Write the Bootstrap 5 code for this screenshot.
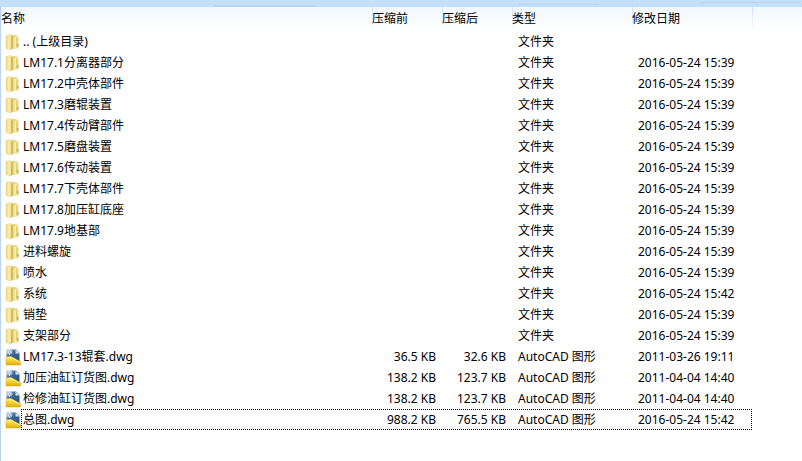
<!DOCTYPE html>
<html lang="zh-CN">
<head>
<meta charset="utf-8">
<meta name="viewport" content="width=device-width, initial-scale=1">
<title>LM17</title>
<link href="https://cdn.jsdelivr.net/npm/bootstrap@5.3.0/dist/css/bootstrap.min.css" rel="stylesheet">
<style>
body{font-family:"Noto Sans","Noto Sans CJK SC",sans-serif;font-size:12px;line-height:20px;color:#000;background:#fff}
.topband{height:7px;background:#c3dffa}
.topband i{height:1px;background:#b5d2f0;width:101px}
.topband .seg-a{margin-left:214px;height:2px}
.topband .seg-b{width:81px;margin-left:203px;margin-bottom:2px}
.topband .seg-c{margin-left:101px;margin-bottom:4px}
.listing{border-left:1px solid #b9d3f3;background:linear-gradient(#f2f8fe,#fff 24px)}
.files{table-layout:fixed;border-collapse:separate;border-spacing:0}
.c-name{width:371px}.c-size{width:70px}.c-info{width:120px}
.files thead tr{height:24px}
.files th{padding:0;font-weight:400}
.files th+th{background:linear-gradient(#c9e1fa,#fff) left/1px 100% no-repeat}
.files th button{font-size:12px;line-height:22px;color:#000}
.files td{height:21px;padding:0 6px;white-space:nowrap}
.files td:first-child{padding:0 0 0 4px}
.files svg{width:16px;height:18px;flex:none}
.fname{margin-left:2px}
.focused::after{content:"";position:absolute;left:20px;top:0;width:731px;height:21px;border:1px dotted #000}
</style>
<script src="https://cdn.jsdelivr.net/npm/bootstrap@5.3.0/dist/js/bootstrap.bundle.min.js"></script>
</head>
<body class="d-flex flex-column min-vh-100">
<svg class="position-absolute" width="0" height="0" aria-hidden="true">
<defs>
<linearGradient id="gold"><stop offset="0" stop-color="#e9d982"/><stop offset=".5" stop-color="#f9efb0"/><stop offset="1" stop-color="#e3ce72"/></linearGradient>
<linearGradient id="sheet" x2="1" y2="1"><stop offset="0" stop-color="#8fb0cf"/><stop offset=".4" stop-color="#3f6896"/><stop offset="1" stop-color="#234a7c"/></linearGradient>
<linearGradient id="ruler" x2="0" y2="1"><stop offset="0" stop-color="#fff06a"/><stop offset="1" stop-color="#e0ae08"/></linearGradient>
<symbol id="folder" viewBox="0 0 16 18">
<path d="M7 2 12 2.5 13 4V15L8 16Z" fill="#e6d27a"/>
<path d="M8 4 12.5 3.5 13.5 5V15L8 16.3Z" fill="url(#gold)"/>
<path d="M1 2.5 5 1.5 7.5 2.5V15.5L5.5 17 1 15.5Z" fill="url(#gold)" stroke="#dfca78" stroke-width=".4"/>
<path d="M6 4 7.8 2.8V15.2L6 16.7Z" fill="#d3b752"/>
<path d="M11.5 5v9.5" stroke="#dcc668" stroke-width=".8"/>
<path d="M12.8 11v2.5" stroke="#51a8c6"/>
</symbol>
<symbol id="dwg" viewBox="0 0 16 18">
<path d="M1.5 1.5H11L14.5 5V14H1.5Z" fill="url(#sheet)"/>
<path d="M10.5 1.5V5.5H14.5Z" fill="#dce8f3"/>
<path d="M1 9 6 8.5 15.5 13.5V17H1Z" fill="url(#ruler)" stroke="#d6a51a" stroke-width=".5"/>
<path d="M1.5 10 5.5 9.2 14.5 14" fill="none" stroke="#fff49a"/>
<path d="M4.5 1V7M1.5 4H7.5M2.5 2 6.5 6M6.5 2 2.5 6" stroke="#fff" stroke-width=".9"/>
<path d="M4 3.5h1v1H4z" fill="#315a87"/>
</symbol>
</defs>
</svg>
<div class="topband d-flex align-items-end"><i class="seg-a"></i><i class="seg-b"></i><i class="seg-c"></i></div>
<main class="listing flex-grow-1">
<table class="files w-100">
<colgroup><col class="c-name"><col class="c-size"><col class="c-size"><col class="c-info"><col class="c-info"><col></colgroup>
<thead><tr>
<th scope="col"><button type="button" class="btn btn-link p-0 border-0 text-decoration-none d-block">名称</button></th>
<th scope="col"><button type="button" class="btn btn-link p-0 border-0 text-decoration-none d-block">压缩前</button></th>
<th scope="col"><button type="button" class="btn btn-link p-0 border-0 text-decoration-none d-block">压缩后</button></th>
<th scope="col"><button type="button" class="btn btn-link p-0 border-0 text-decoration-none d-block">类型</button></th>
<th scope="col"><button type="button" class="btn btn-link p-0 border-0 text-decoration-none d-block">修改日期</button></th>
<th></th>
</tr></thead>
<tbody id="rows"></tbody>
</table>
</main>
<script>
const day = '2016-05-24 15:39';
const folders = [['.. (上级目录)', ''], ['LM17.1分离器部分', day], ['LM17.2中壳体部件', day], ['LM17.3磨辊装置', day],
  ['LM17.4传动臂部件', day], ['LM17.5磨盘装置', day], ['LM17.6传动装置', day], ['LM17.7下壳体部件', day],
  ['LM17.8加压缸底座', day], ['LM17.9地基部', day], ['进料螺旋', day], ['喷水', day],
  ['系统', '2016-05-24 15:42'], ['销垫', day], ['支架部分', day]];
const drawings = [['LM17.3-13辊套.dwg', '36.5 KB', '32.6 KB', '2011-03-26 19:11'],
  ['加压油缸订货图.dwg', '138.2 KB', '123.7 KB', '2011-04-04 14:40'],
  ['检修油缸订货图.dwg', '138.2 KB', '123.7 KB', '2011-04-04 14:40'],
  ['总图.dwg', '988.2 KB', '765.5 KB', '2016-05-24 15:42']];
const row = (icon, name, before, after, type, date, cls = '') => `<tr class="${cls}">
  <td><div class="d-flex align-items-center"><svg aria-hidden="true"><use href="#${icon}"/></svg><span class="fname">${name}</span></div></td>
  <td class="text-end">${before}</td><td class="text-end">${after}</td><td>${type}</td><td>${date}</td><td></td></tr>`;
document.getElementById('rows').innerHTML =
  folders.map(([n, d]) => row('folder', n, '', '', '文件夹', d)).join('') +
  drawings.map(([n, b, a, d], i) => row('dwg', n, b, a, 'AutoCAD 图形', d, i === 3 ? 'focused position-relative' : '')).join('');
</script>
</body>
</html>
